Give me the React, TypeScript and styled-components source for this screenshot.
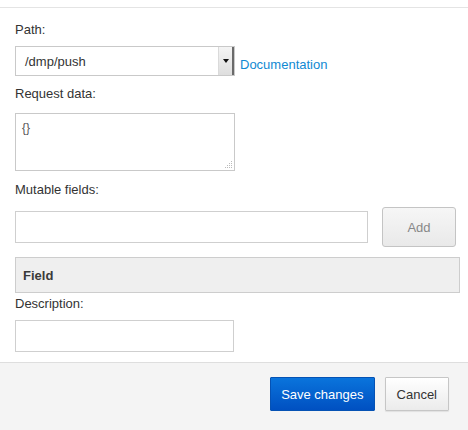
import React from 'react';
import styled, { createGlobalStyle } from 'styled-components';

const GlobalStyle = createGlobalStyle`
  body {
    margin: 0;
    background: #fff;
    font-family: "Liberation Sans", Arial, sans-serif;
    font-size: 13px;
    color: #333;
  }
`;

const Dialog = styled.div`
  width: 468px;
  height: 430px;
  display: flex;
  flex-direction: column;
  box-sizing: border-box;
`;

const TopBar = styled.div`
  height: 7px;
  border-bottom: 1px solid #e4e4e4;
`;

const Body = styled.div`
  flex: 1;
  padding: 13px 0 0 15px;
  display: flex;
  flex-direction: column;
  align-items: flex-start;
`;

const Label = styled.div<{ $gap?: number }>`
  line-height: 18px;
  color: #333;
  margin-top: ${p => p.$gap ?? 0}px;
`;

const PathRow = styled.div`
  display: flex;
  align-items: center;
  margin-top: 7px;
  gap: 5px;
`;

const SelectBox = styled.div`
  width: 220px;
  height: 30px;
  box-sizing: border-box;
  border: 1px solid #c9c9c9;
  display: flex;
  align-items: stretch;
  background: #fff;
`;

const SelectValue = styled.div`
  flex: 1;
  padding-left: 9px;
  display: flex;
  align-items: center;
  color: #333;
`;

const SelectArrow = styled.div`
  width: 13px;
  display: flex;
  align-items: center;
  justify-content: center;
  background: linear-gradient(#f4f4f4, #dedede);
  border-left: 1px solid #dadada;
  box-shadow: inset -2px 0 0 #6a6a6a;
  padding-right: 2px;
  &::after {
    content: '';
    border-left: 3px solid transparent;
    border-right: 3px solid transparent;
    border-top: 4px solid #111;
  }
`;

const DocLink = styled.a`
  color: #1089d3;
  text-decoration: none;
  padding-top: 7px;
`;

const TextArea = styled.div`
  position: relative;
  margin-top: 10px;
  width: 220px;
  height: 58px;
  box-sizing: border-box;
  border: 1px solid #c9c9c9;
  padding: 7px 6px;
  font-size: 12px;
  color: #555;
`;

const Grip = styled.svg`
  position: absolute;
  right: 1px;
  bottom: 1px;
`;

const FieldRow = styled.div`
  display: flex;
  align-items: center;
  gap: 14px;
  margin-top: 8px;
`;

const TextInput = styled.div<{ $w: number }>`
  width: ${p => p.$w}px;
  height: 32px;
  box-sizing: border-box;
  border: 1px solid #cfcfcf;
  background: #fff;
`;

const AddButton = styled.button`
  width: 74px;
  height: 40px;
  border: 1px solid #c4c4c4;
  border-radius: 3px;
  background: linear-gradient(#f6f6f6, #e9e9e9);
  color: #888;
  font-family: inherit;
  font-size: 13px;
`;

const TableHead = styled.div`
  margin-top: 10px;
  width: 445px;
  height: 36px;
  box-sizing: border-box;
  border: 1px solid #cdcdcd;
  background: #efefef;
  display: flex;
  align-items: center;
  padding-left: 7px;
  font-weight: bold;
  color: #3a3a3a;
`;

const DescInput = styled(TextInput)`
  margin-top: 7px;
`;

const Footer = styled.div`
  height: 68px;
  box-sizing: border-box;
  border-top: 1px solid #dedede;
  background: #f4f4f4;
  display: flex;
  justify-content: flex-end;
  align-items: flex-start;
  gap: 10px;
  padding: 14px 19px 0 0;
`;

const Button = styled.button<{ $primary?: boolean }>`
  height: 34px;
  padding: 0 ${p => (p.$primary ? 10 : 11)}px;
  font-family: inherit;
  font-size: 13px;
  border-radius: 1px;
  border: 1px solid ${p => (p.$primary ? '#0552b4' : '#c6c6c6')};
  background: ${p => (p.$primary ? 'linear-gradient(#0a74dc, #0050c1)' : 'linear-gradient(#fff, #ebebeb)')};
  color: ${p => (p.$primary ? '#fff' : '#333')};
  box-shadow: ${p => (p.$primary ? 'none' : '0 1px 1px rgba(0,0,0,0.08)')};
`;

export default function App() {
  return (
    <Dialog>
      <GlobalStyle />
      <TopBar />
      <Body>
        <Label>Path:</Label>
        <PathRow>
          <SelectBox>
            <SelectValue>/dmp/push</SelectValue>
            <SelectArrow />
          </SelectBox>
          <DocLink href="#">Documentation</DocLink>
        </PathRow>
        <Label $gap={9}>Request data:</Label>
        <TextArea>
          {'{}'}
          <Grip width="8" height="8" viewBox="0 0 8 8">
            <g fill="#bbb">
              <rect x="6" y="0" width="1" height="1" />
              <rect x="4" y="2" width="1" height="1" />
              <rect x="6" y="2" width="1" height="1" />
              <rect x="2" y="4" width="1" height="1" />
              <rect x="4" y="4" width="1" height="1" />
              <rect x="6" y="4" width="1" height="1" />
              <rect x="0" y="6" width="1" height="1" />
              <rect x="2" y="6" width="1" height="1" />
              <rect x="4" y="6" width="1" height="1" />
              <rect x="6" y="6" width="1" height="1" />
            </g>
          </Grip>
        </TextArea>
        <Label $gap={10}>Mutable fields:</Label>
        <FieldRow>
          <TextInput $w={353} />
          <AddButton>Add</AddButton>
        </FieldRow>
        <TableHead>Field</TableHead>
        <Label $gap={2}>Description:</Label>
        <DescInput $w={219} />
      </Body>
      <Footer>
        <Button $primary>Save changes</Button>
        <Button>Cancel</Button>
      </Footer>
    </Dialog>
  );
}
